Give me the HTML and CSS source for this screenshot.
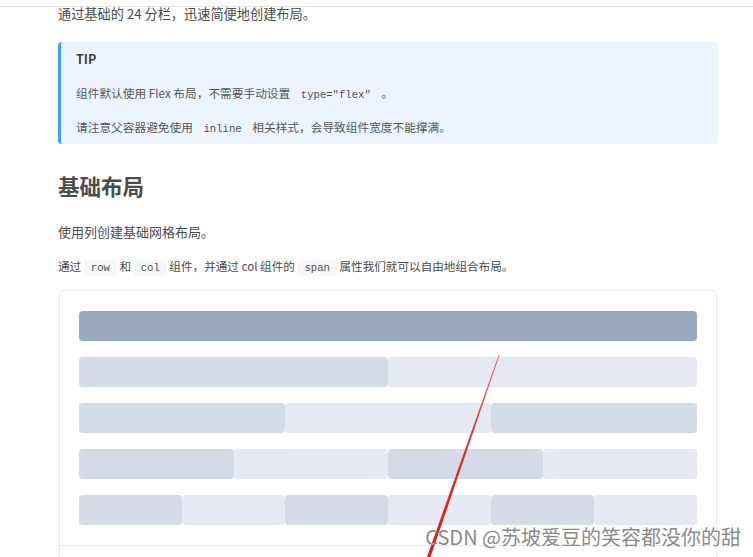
FILE: index.html
```html
<!DOCTYPE html>
<html lang="zh-CN">
<head>
<meta charset="utf-8">
<title>Layout 布局</title>
<link rel="stylesheet" href="styles.css">
</head>
<body>
<div class="topbar"></div>
<main class="content">
  <p class="intro">通过基础的 24 分栏，迅速简便地创建布局。</p>
  <div class="tip">
    <p class="tip-title">TIP</p>
    <p class="tip-line">组件默认使用 Flex 布局，不需要手动设置 <code>type="flex"</code> 。</p>
    <p class="tip-line">请注意父容器避免使用 <code>inline</code> 相关样式，会导致组件宽度不能撑满。</p>
  </div>
  <h2 class="heading">基础布局</h2>
  <p class="para p1">使用列创建基础网格布局。</p>
  <p class="para p2">通过 <code>row</code> 和 <code>col</code> 组件，并通过 col 组件的 <code>span</code> 属性我们就可以自由地组合布局。</p>
  <div class="demo">
    <div class="demo-body">
      <div class="row"><div class="col dark span-24"></div></div>
      <div class="row">
        <div class="col mid span-12"></div><div class="col light span-12"></div>
      </div>
      <div class="row">
        <div class="col mid span-8"></div><div class="col light span-8"></div><div class="col mid span-8"></div>
      </div>
      <div class="row">
        <div class="col mid span-6"></div><div class="col light span-6"></div><div class="col mid span-6"></div><div class="col light span-6"></div>
      </div>
      <div class="row">
        <div class="col mid span-4"></div><div class="col light span-4"></div><div class="col mid span-4"></div><div class="col light span-4"></div><div class="col mid span-4"></div><div class="col light span-4"></div>
      </div>
    </div>
    <div class="demo-footer"></div>
  </div>
</main>
<svg class="annotation" width="753" height="557" viewBox="0 0 753 557">
  <defs>
    <linearGradient id="red" x1="0" y1="0" x2="0" y2="1">
      <stop offset="0" stop-color="#f07070"/>
      <stop offset="0.4" stop-color="#e23030"/>
      <stop offset="1" stop-color="#e01818"/>
    </linearGradient>
  </defs>
  <polygon points="498.6,355 499.6,355 430.5,557 427,557" fill="url(#red)"/>
</svg>
<div class="watermark">CSDN @苏坡爱豆的笑容都没你的甜</div>
</body>
</html>
```

FILE: styles.css
```css
html, body {
  margin: 0;
  padding: 0;
}
body {
  position: relative;
  width: 753px;
  height: 557px;
  overflow: hidden;
  background: #ffffff;
  font-family: "Noto Sans CJK SC", "Noto Sans", sans-serif;
  color: #4a4a4a;
}
.topbar {
  height: 6px;
  border-bottom: 1px solid #e4e4e4;
}
.content {
  padding: 0 35px 0 58px;
}
p {
  margin: 0;
}
.intro {
  margin-top: -1px;
  font-size: 13.2px;
  line-height: 16px;
}
.tip {
  margin-top: 20px;
  padding: 8px 16px 8px 15px;
  background: #ecf5ff;
  border-left: 3px solid #409eff;
  border-radius: 4px;
  height: 86px;
}
.tip-title {
  font-size: 12.5px;
  font-weight: 700;
  line-height: 18px;
  color: #3d3d3d;
}
.tip-line {
  margin-top: 16px;
  font-size: 11.7px;
  line-height: 18px;
  height: 18px;
  color: #555;
}
code {
  font-family: "Liberation Mono", "DejaVu Sans Mono", monospace;
  font-size: 10.6px;
  line-height: 1;
  padding: 2px 7px;
  border-radius: 3px;
  color: #4e4e4e;
}
.tip code {
  background: transparent;
  padding: 2px 8px;
}
.heading {
  margin: 28px 0 0;
  font-size: 21.5px;
  line-height: 28px;
  font-weight: 700;
  color: #4c4c4c;
}
.para {
  font-size: 13px;
  line-height: 20px;
}
.p1 {
  margin-top: 22px;
}
.p2 {
  margin-top: 14px;
  font-size: 11.6px;
}
.p2 code {
  background: #f5f7fa;
}
.demo {
  margin: 14px 1px 0;
  border: 1px solid #e8eaee;
  border-radius: 4px;
}
.demo-body {
  padding: 20px 19px 20px;
  display: flex;
  flex-direction: column;
  gap: 16px;
}
.row {
  display: flex;
  height: 30px;
}
.col {
  border-radius: 4px;
}
.span-24 { flex: 0 0 100%; }
.span-12 { flex: 0 0 50%; }
.span-8 { flex: 0 0 33.3333%; }
.span-6 { flex: 0 0 25%; }
.span-4 { flex: 0 0 16.6667%; }
.dark { background: #99a9bf; }
.mid { background: #d3dce6; }
.light { background: #e5e9f2; }
.demo-footer {
  height: 40px;
  border-top: 1px solid #e8eaee;
}
.annotation {
  position: absolute;
  left: 0;
  top: 0;
  pointer-events: none;
}
.watermark {
  position: absolute;
  right: 12px;
  top: 525px;
  font-family: "Noto Sans CJK SC", sans-serif;
  font-size: 20px;
  line-height: 24px;
  color: #8a8a8a;
  text-shadow: 0 0 1px #ffffff;
  white-space: nowrap;
}
```
